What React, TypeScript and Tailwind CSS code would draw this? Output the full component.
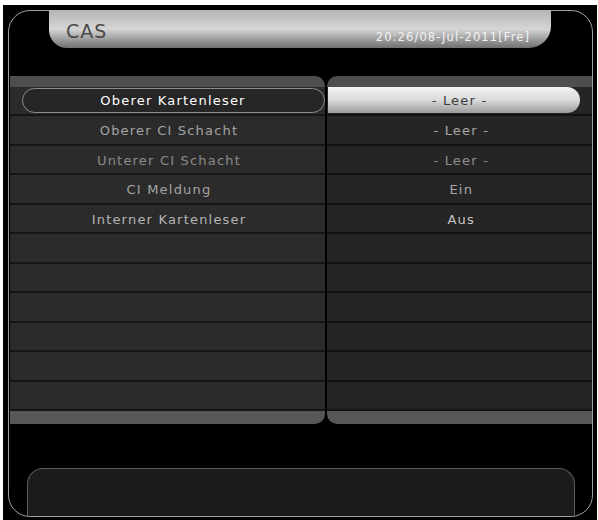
const rows = [
  { label: "Oberer Kartenleser", value: "- Leer -", labelColor: "text-white", valueColor: "text-[#3a3a3a]" },
  { label: "Oberer CI Schacht", value: "- Leer -", labelColor: "text-[#a4a4a4]", valueColor: "text-[#a8a8a8]" },
  { label: "Unterer CI Schacht", value: "- Leer -", labelColor: "text-[#8c8c8c]", valueColor: "text-[#8e8e8e]" },
  { label: "CI Meldung", value: "Ein", labelColor: "text-[#a4a4a4]", valueColor: "text-[#a8a8a8]" },
  { label: "Interner Kartenleser", value: "Aus", labelColor: "text-[#b4b4b4]", valueColor: "text-[#c4c4c4]" },
  { label: "", value: "" },
  { label: "", value: "" },
  { label: "", value: "" },
  { label: "", value: "" },
  { label: "", value: "" },
  { label: "", value: "" },
]

export default function App() {
  return (
    <div className="w-[598px] h-[520px] bg-white pl-[3px] pt-[5px] font-['DejaVu_Sans',sans-serif]">
      <div className="w-[594px] h-[515px] bg-black pl-[5px] pt-[5px]">
        <div className="w-[585px] h-[507px] rounded-[22px] border-[1.5px] border-[#a0a0a0] flex flex-col">
          {/* header bar */}
          <div className="-mt-[1.5px] ml-[40px] w-[502px] h-[38px] rounded-bl-[18px] rounded-br-[22px] bg-gradient-to-b from-[#b4b4b4] via-[#d6d6d6] to-[#707070] flex items-end justify-between pl-[17px] pr-[21px] pb-[4px]">
            <span className="text-[19px] leading-none tracking-[1px] text-[#4a4a4a] mb-[3px]">CAS</span>
            <span className="text-[11.5px] leading-none tracking-[1.1px] text-[#f2f2f2]">20:26/08-Jul-2011[Fre]</span>
          </div>

          <div className="h-[28px]" />

          {/* list panel */}
          <div className="flex gap-[2px] ml-[0.5px]">
            <div className="w-[315px] flex flex-col">
              <div className="h-[11px] bg-[#4e4e4e] rounded-tr-[10px]" />
              {rows.map((r, i) => (
                <div key={i} className="h-[29.5px] bg-[#2b2b2b] border-b-2 border-[#151515] flex items-center">
                  {i === 0 ? (
                    <div className="ml-[12px] w-[305px] h-[25px] rounded-full border-[1.5px] border-[#8c8c8c] bg-[#262626] flex items-center justify-center relative z-10">
                      <span className="text-[13px] tracking-[1.2px] text-white">{r.label}</span>
                    </div>
                  ) : (
                    <span className={`w-full text-center text-[13px] tracking-[1.2px] pt-[2px] pl-[4px] ${r.labelColor}`}>{r.label}</span>
                  )}
                </div>
              ))}
              <div className="h-[13px] bg-[#575757] rounded-br-[10px]" />
            </div>
            <div className="flex-1 flex flex-col">
              <div className="h-[11px] bg-[#4e4e4e] rounded-tl-[10px]" />
              {rows.map((r, i) => (
                <div key={i} className="h-[29.5px] bg-[#252525] border-b-2 border-[#121212] flex items-center">
                  {i === 0 ? (
                    <div className="ml-[1px] w-[252px] h-[26px] rounded-r-full bg-gradient-to-b from-[#f4f4f4] via-[#dadada] to-[#9c9c9c] flex items-center justify-center">
                      <span className="text-[13px] tracking-[1.2px] text-[#3a3a3a] ml-[12px]">{r.value}</span>
                    </div>
                  ) : (
                    <span className={`w-full text-center text-[13px] tracking-[1.2px] pt-[2px] pl-[4px] ${r.valueColor}`}>{r.value}</span>
                  )}
                </div>
              ))}
              <div className="h-[13px] bg-[#575757] rounded-bl-[10px]" />
            </div>
          </div>

          <div className="h-[44px]" />

          {/* info box */}
          <div className="ml-[18px] w-[548px] flex-1 rounded-t-[16px] border-[1.5px] border-b-0 border-[#5e5e5e] bg-[#1b1b1b]" />
        </div>
      </div>
    </div>
  )
}
